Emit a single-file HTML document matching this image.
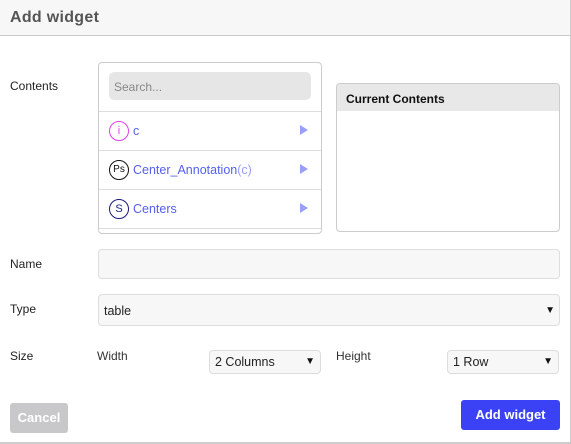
<!DOCTYPE html>
<html><head><style>
*{box-sizing:border-box;margin:0;padding:0}
body{width:571px;height:444px;background:#fff;font-family:"Liberation Sans",sans-serif;position:relative;overflow:hidden;font-size:12px;color:#222}
.a{position:absolute}
.hdr{left:0;top:0;width:571px;height:36px;background:#f7f7f8;border-bottom:1px solid #c9c9cc;border-right:1px solid #c9c9cc}
.hdr span{position:absolute;left:10px;top:9px;font-size:16px;color:#555;font-weight:bold;letter-spacing:.3px}
.box{border:1px solid #ccc;border-radius:4px;background:#fff}
.inp{border:1px solid #ddd;border-radius:4px;background:#f7f7f7}
.row{left:0;width:222px;height:39px;border-top:1px solid #ddd}
.ic{position:absolute;left:10px;top:9px;width:20px;height:20px;border-radius:50%;border:1px solid;font-size:11px;text-align:center;line-height:18px}
.lbl{position:absolute;left:34px;top:12px;color:#5560f0;font-size:12.5px}
.tri{position:absolute;left:201px;top:13px;width:0;height:0;border-left:8px solid #99a0f7;border-top:5px solid transparent;border-bottom:5px solid transparent}
.arr{position:absolute;font-size:10px;color:#111}
</style></head><body>
<div class="a hdr"><span>Add widget</span></div>
<div class="a" style="left:10px;top:79px">Contents</div>
<div class="a box" style="left:98px;top:62px;width:224px;height:172px;overflow:hidden">
 <div class="a" style="left:10px;top:9px;width:202px;height:28px;background:#e6e6e6;border-radius:5px;color:#888;padding:8px 5px;font-size:12px">Search...</div>
 <div class="a row" style="top:48px"><div class="ic" style="border-color:#e040e8;color:#e040e8">i</div><div class="lbl">c</div><div class="tri"></div></div>
 <div class="a row" style="top:87px"><div class="ic" style="border-color:#111;color:#111;font-size:10px">Ps</div><div class="lbl">Center_Annotation<span style="color:#99a0f0">(c)</span></div><div class="tri"></div></div>
 <div class="a row" style="top:126px"><div class="ic" style="border-color:#1a1a80;color:#1a1a80">S</div><div class="lbl">Centers</div><div class="tri"></div></div>
 <div class="a row" style="top:165px"></div>
</div>
<div class="a box" style="left:336px;top:83px;width:224px;height:149px;overflow:hidden">
 <div style="height:27px;background:#e8e8e8;font-weight:bold;padding:8px 9px;font-size:12px;color:#111">Current Contents</div>
</div>
<div class="a" style="left:10px;top:257px">Name</div>
<div class="a inp" style="left:98px;top:249px;width:462px;height:30px"></div>
<div class="a" style="left:10px;top:302px">Type</div>
<div class="a inp" style="left:98px;top:294px;width:462px;height:32px"><span class="a" style="left:5px;top:9px;font-size:12.5px">table</span><span class="arr" style="right:4px;top:10px">▼</span></div>
<div class="a" style="left:10px;top:349px">Size</div>
<div class="a" style="left:97px;top:349px;color:#333">Width</div>
<div class="a inp" style="left:209px;top:350px;width:112px;height:24px"><span class="a" style="left:5px;top:4px;font-size:12.5px">2 Columns</span><span class="arr" style="right:5px;top:5px">▼</span></div>
<div class="a" style="left:336px;top:349px;color:#333">Height</div>
<div class="a inp" style="left:447px;top:350px;width:112px;height:24px"><span class="a" style="left:5px;top:4px;font-size:12.5px">1 Row</span><span class="arr" style="right:5px;top:5px">▼</span></div>
<div class="a" style="left:10px;top:403px;width:58px;height:30px;background:#c8c8cb;border-radius:3px;color:#fff;font-weight:bold;text-align:center;line-height:30px;font-size:13px">Cancel</div>
<div class="a" style="left:461px;top:400px;width:99px;height:30px;background:#3b42f5;border-radius:3px;color:#fff;font-weight:bold;text-align:center;line-height:30px;font-size:13px">Add widget</div>
<div class="a" style="left:0;top:442px;width:571px;height:2px;background:#ccc"></div>
<div class="a" style="left:570px;top:0;width:1px;height:444px;background:#ccc"></div>
</body></html>
